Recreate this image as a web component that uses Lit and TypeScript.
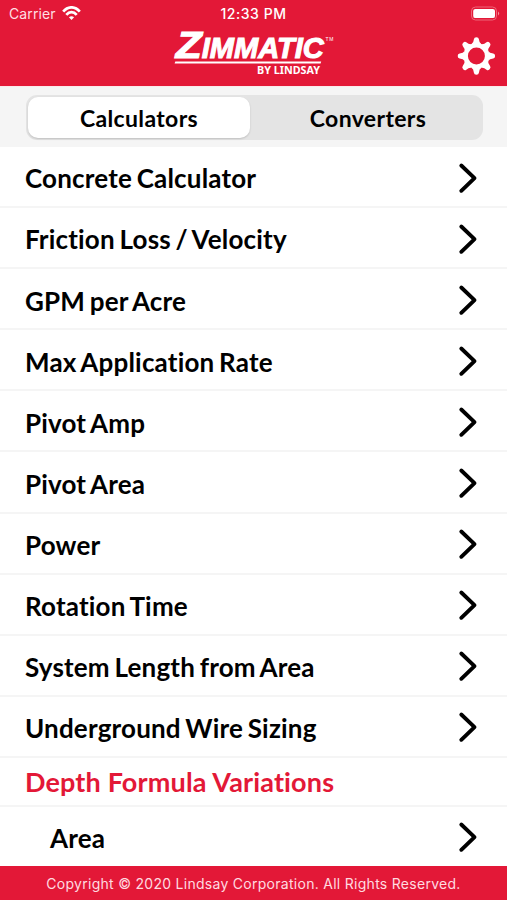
import { LitElement, html, svg, css } from "lit";
import { customElement, property, state } from "lit/decorators.js";
import { classMap } from "lit/directives/class-map.js";

@customElement("status-bar")
class StatusBar extends LitElement {
  static styles = css`
    :host {
      display: grid;
      grid-template-columns: 1fr auto 1fr;
      height: 27px;
      align-items: center;
      color: #fff;
      font: 500 14px/27px Inter, sans-serif;
    }
    .left { display: flex; align-items: center; gap: 6px; padding-left: 9px; color: #ffdfe3; font-weight: 400; font-size: 14px; letter-spacing: 0.1px; }
    .time { letter-spacing: 0.55px; }
    .right { display: flex; justify-content: flex-end; padding-right: 6px; }
    svg { display: block; }
  `;
  render() {
    return html`
      <div class="left">
        <span>Carrier</span>
        <svg width="19" height="15" viewBox="0 0 19 15" fill="none" stroke="#fff" stroke-width="2.7">
          <path d="M1.2 5.6C6-.1 13-.1 17.8 5.6" />
          <path d="M4.3 8.8C7.4 5.2 11.6 5.2 14.7 8.8" />
          <path d="M9.5 14 6.9 11.3Q9.5 9 12.1 11.3Z" fill="#fff" stroke="none" />
        </svg>
      </div>
      <span class="time">12:33 PM</span>
      <div class="right">
        <svg width="31" height="15" viewBox="0 0 31 15">
          <rect x="1.5" y="1" width="25" height="13" rx="4" fill="none" stroke="#ee6579" />
          <rect x="3.2" y="2.9" width="21.8" height="9.2" rx="2.2" fill="#fff" />
          <path d="M28 5.5q2.4 2 0 4z" fill="#f7909c" />
        </svg>
      </div>
    `;
  }
}

@customElement("brand-bar")
class BrandBar extends LitElement {
  static styles = css`
    :host {
      display: grid;
      grid-template-columns: 1fr 164px 1fr;
      height: 59px;
    }
    .logo { grid-column: 2; display: block; overflow: visible; }
    .gear { justify-self: end; margin: 9px 11px 0 0; display: block; }
    .word { font: italic 700 30px "Liberation Sans", Arial, sans-serif; }
    .initial { font-size: 37.5px; }
    .sub { font: 700 10px "Noto Sans", sans-serif; }
    .tm { font: 5px "Liberation Sans", sans-serif; }
  `;
  render() {
    const teeth = [0, 45, 90, 135, 180, 225, 270, 315];
    return html`
      <svg class="logo" width="164" height="59" viewBox="172 27 164 59" fill="#fff">
        <g class="word" stroke="#fff" stroke-width="1.1">
          <text class="initial" x="175.8" y="58.4" textLength="26" lengthAdjust="spacingAndGlyphs">Z</text>
          <text x="201.8" y="58.4" textLength="122" lengthAdjust="spacingAndGlyphs">IMMATIC</text>
        </g>
        <text class="tm" x="325.5" y="41" textLength="8">TM</text>
        <path d="M175.3 61.4H321.2L320.6 63.4H174.6Z" />
        <text class="sub" x="257" y="74.2" textLength="63" lengthAdjust="spacingAndGlyphs">BY LINDSAY</text>
      </svg>
      <svg class="gear" width="40" height="40" viewBox="-20.4 -20 40 40" fill="#fff">
        <circle r="10.7" fill="none" stroke="#fff" stroke-width="4.4" />
        ${teeth.map(
          (a) => svg`<path transform="rotate(${a})" d="M-5-11.8Q-2.8-13-2.5-16.8Q-2.3-18.7 0-18.7T2.5-16.8Q2.8-13 5-11.8Z" />`,
        )}
      </svg>
    `;
  }
}

@customElement("segment-control")
class SegmentControl extends LitElement {
  @property({ type: Array }) options: string[] = [];
  @state() private selected = 0;
  static styles = css`
    :host { display: block; height: 61px; box-sizing: border-box; padding: 8px 24px 0 26px; background: #f5f5f5; border-top: 1px solid #fbe9eb; }
    .track { display: grid; grid-template-columns: 225px 1fr; height: 45px; box-sizing: border-box; padding: 2px 0; border-radius: 11px; background: #e4e4e4; }
    .option { appearance: none; border: 0; padding: 1px 0 0 2px; background: none; color: #000; font: 700 23px/38px Lato, sans-serif; letter-spacing: 0.35px; border-radius: 10px; }
    .option.on { padding-left: 0; background: #fff; margin: 0 1px 0 2px; box-shadow: 0 1px 2px rgba(0, 0, 0, 0.16); }
  `;
  render() {
    return html`<div class="track">
      ${this.options.map(
        (o, i) => html`<button class=${classMap({ option: true, on: i === this.selected })} @click=${() => (this.selected = i)}>${o}</button>`,
      )}
    </div>`;
  }
}

@customElement("list-row")
class ListRow extends LitElement {
  @property() label = "";
  static styles = css`
    :host { display: flex; align-items: center; justify-content: space-between; height: 61.1px; box-sizing: border-box; padding: 2px 29px 0 25px; border-bottom: 2px solid #f5f5f5; color: #000; font: 700 26px/32px Lato, sans-serif; letter-spacing: 0.18px; word-spacing: -1.8px; }
    :host(.nested) { padding-left: 50px; padding-top: 0; border-bottom: 0; }
    span { padding-top: 1.6px; }
    svg { display: block; }
  `;
  render() {
    return html`<span>${this.label}</span>
      <svg width="20" height="32" viewBox="0 0 20 32" fill="none" stroke="#000" stroke-width="3.9" stroke-linecap="round" stroke-linejoin="round">
        <path d="M3.3 3.5 16.5 16.1 3.3 28.8" />
      </svg>`;
  }
}

@customElement("app-root")
class AppRoot extends LitElement {
  static styles = css`
    :host { display: flex; flex-direction: column; height: 900px; overflow: hidden; background: #fff; }
    header { background: #e31837; height: 86px; flex: none; }
    segment-control { flex: none; }
    main { flex: 1; min-height: 0; overflow: hidden; }
    .section { margin: 0; height: 49px; box-sizing: border-box; padding: 0 25px; border-bottom: 2px solid #f5f5f5; color: #e31837; font: 700 27px/48px Lato, sans-serif; letter-spacing: 0.15px; }
    footer { flex: none; height: 34px; background: #e31837; color: #ffdbe0; text-align: center; font: 400 14px/35px Inter, sans-serif; letter-spacing: 0.28px; }
  `;
  private calculators = [
    "Concrete Calculator",
    "Friction Loss / Velocity",
    "GPM per Acre",
    "Max Application Rate",
    "Pivot Amp",
    "Pivot Area",
    "Power",
    "Rotation Time",
    "System Length from Area",
    "Underground Wire Sizing",
  ];
  render() {
    return html`
      <header><status-bar></status-bar><brand-bar></brand-bar></header>
      <segment-control .options=${["Calculators", "Converters"]}></segment-control>
      <main>
        ${this.calculators.map((c) => html`<list-row label=${c}></list-row>`)}
        <h2 class="section">Depth Formula Variations</h2>
        <list-row class="nested" label="Area"></list-row>
      </main>
      <footer>Copyright © 2020 Lindsay Corporation. All Rights Reserved.</footer>
    `;
  }
}
